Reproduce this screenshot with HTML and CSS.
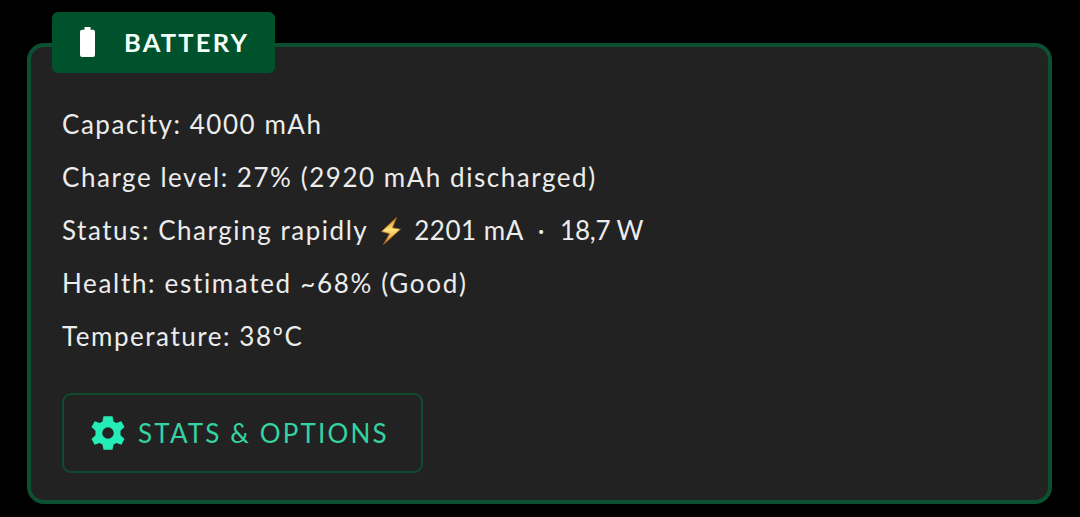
FILE: index.html
```html
<!DOCTYPE html>
<html lang="en">
<head>
    <meta charset="UTF-8">
    <meta name="viewport" content="width=device-width, initial-scale=1.0">
    <title>Battery</title>
    <link rel="stylesheet" href="styles.css">
</head>
<body>
    <section class="card">
        <h2 class="card-title">
            <svg class="battery-icon" viewBox="0 0 15 30">
                <path d="M4.500 0h6v2.800H13a2 2 0 0 1 2 2V28a2 2 0 0 1-2 2H2a2 2 0 0 1-2-2V4.800a2 2 0 0 1 2-2h2.500z"/>
            </svg>
            <span>BATTERY</span>
        </h2>
        <ul class="info">
            <li class="capacity">Capacity: 4000 mAh</li>
            <li class="level">Charge level: 27% (2920 mAh discharged)</li>
            <li class="status">
                <span>Status: Charging rapidly</span>
                <svg class="bolt" viewBox="0 0 22 30">
                    <defs>
                        <linearGradient id="bolt-fill" x1="0" y1="0" x2="0" y2="1">
                            <stop offset="0" stop-color="#e8901f"/>
                            <stop offset="0.45" stop-color="#ffe27a"/>
                            <stop offset="1" stop-color="#d87f1c"/>
                        </linearGradient>
                    </defs>
                    <path d="M16.500 1.500L1.500 15.500l8 2.200L3.500 28.500 20.500 13.200l-8-1.500z"/>
                </svg>
                <span class="current">2201 mA</span>
                <span class="dot">·</span>
                <span class="power">18,7 W</span>
            </li>
            <li class="health">Health: estimated ~68% (Good)</li>
            <li class="temperature">Temperature: 38ºC</li>
        </ul>
        <button class="options">
            <svg class="gear" viewBox="-17 -17 34 34">
                <path d="M-4.500-16.800h9l1 5.200 2.800 1.600 5-1.800 3.200 5.800-4 3.800v4.400l4 3.800-3.200 5.800-5-1.800-2.800 1.600-1 5.200h-9l-1-5.200-2.800-1.600-5 1.800-3.200-5.800 4-3.800v-4.400l-4-3.800 3.200-5.800 5 1.800 2.800-1.600zM0-5.800a5.800 5.800 0 1 0 0 11.600 5.800 5.800 0 0 0 0-11.600z"/>
            </svg>
            <span>STATS &amp; OPTIONS</span>
        </button>
    </section>
</body>
</html>
```

FILE: styles.css
```css
* {
    box-sizing: border-box;
}

body {
    margin: 0;
    padding: 12px 28px 0 27px;
    background: #000;
    color: #ececec;
    font-family: Lato, sans-serif;
    font-size: 26px;
}

.card {
    height: 461px;
    margin-top: 31px;
    padding: 0 31px;
    background: #222;
    border: 4px solid #0b5031;
    border-radius: 17px;
}

.card-title {
    display: flex;
    align-items: center;
    gap: 29px;
    width: 223px;
    height: 61px;
    margin: -35px 0 0 -10px;
    padding: 0 0 1px 28px;
    background: #00522d;
    border-radius: 6px;
    color: #f4fff8;
    font-size: 25.5px;
    font-weight: bold;
    letter-spacing: 2.2px;
}

.battery-icon {
    width: 15px;
    height: 30px;
    fill: #fff;
}

.info {
    margin: 25px 0 0;
    padding: 0;
    list-style: none;
}

.info li {
    height: 53px;
    line-height: 53px;
    white-space: nowrap;
    letter-spacing: 1.54px;
}

.info .health {
    letter-spacing: 1.67px;
}

.info .status {
    display: flex;
    align-items: center;
}

.bolt {
    width: 22px;
    height: 30px;
    margin: 0 12px;
    fill: url(#bolt-fill);
    stroke: #a8691c;
    stroke-width: 0.8;
}

.current {
    letter-spacing: 0.5px;
}

.dot {
    margin: 0 14px;
}

.power {
    letter-spacing: -0.2px;
}

.options {
    display: flex;
    align-items: center;
    gap: 13px;
    width: 361px;
    height: 80px;
    margin-top: 30px;
    padding: 0 0 0 27px;
    background: none;
    border: 2px solid #104b30;
    border-radius: 9px;
    color: #35d3a2;
    font: inherit;
    letter-spacing: 2.15px;
}

.gear {
    width: 34px;
    height: 34px;
    fill: #25ebb7;
    stroke-linejoin: round;
}
```
